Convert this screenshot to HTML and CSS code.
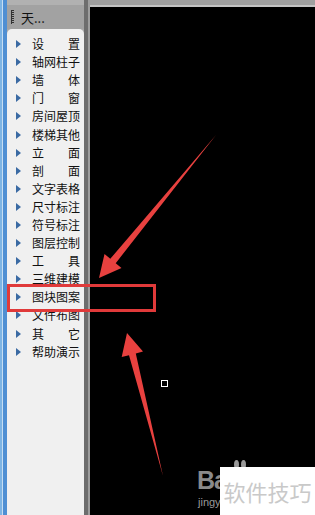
FILE: index.html
```html
<!DOCTYPE html>
<html lang="zh-CN">
<head>
    <meta charset="UTF-8">
    <title>天正建筑 - 菜单</title>
    <link rel="stylesheet" href="styles.css">
</head>
<body>
    <div class="app">
        <div class="edge"></div>

        <div class="panel">
            <div class="panel-top"></div>
            <div class="titlebar">
                <span class="grip"></span>
                <span class="title">天...</span>
            </div>
            <ul class="menu">
                <li><span class="arrow"></span><span class="label"><b>设</b><b>置</b></span></li>
                <li><span class="arrow"></span><span class="label">轴网柱子</span></li>
                <li><span class="arrow"></span><span class="label"><b>墙</b><b>体</b></span></li>
                <li><span class="arrow"></span><span class="label"><b>门</b><b>窗</b></span></li>
                <li><span class="arrow"></span><span class="label">房间屋顶</span></li>
                <li><span class="arrow"></span><span class="label">楼梯其他</span></li>
                <li><span class="arrow"></span><span class="label"><b>立</b><b>面</b></span></li>
                <li><span class="arrow"></span><span class="label"><b>剖</b><b>面</b></span></li>
                <li><span class="arrow"></span><span class="label">文字表格</span></li>
                <li><span class="arrow"></span><span class="label">尺寸标注</span></li>
                <li><span class="arrow"></span><span class="label">符号标注</span></li>
                <li><span class="arrow"></span><span class="label">图层控制</span></li>
                <li><span class="arrow"></span><span class="label"><b>工</b><b>具</b></span></li>
                <li><span class="arrow"></span><span class="label">三维建模</span></li>
                <li><span class="arrow"></span><span class="label">图块图案</span></li>
                <li><span class="arrow"></span><span class="label">文件布图</span></li>
                <li><span class="arrow"></span><span class="label"><b>其</b><b>它</b></span></li>
                <li><span class="arrow"></span><span class="label">帮助演示</span></li>
            </ul>
        </div>

        <div class="splitter"></div>

        <div class="view">
            <div class="view-top"></div>
            <div class="canvas">
                <span class="pick-box"></span>
            </div>
        </div>

        <!-- annotation layer drawn over the screenshot -->
        <svg class="marks" width="315" height="515" viewBox="0 0 315 515">
            <rect x="8.5" y="285.5" width="146" height="25" fill="none" stroke="#e03a3a" stroke-width="3"/>
            <polygon fill="#e8413f" points="216,135 115.7,263.2 121.5,268 99,278 104.5,254 110.3,258.8"/>
            <polygon fill="#e8413f" points="163,476 135.8,353.4 143,351.6 127,333 121.7,357 129,355.2"/>
        </svg>

        <div class="logo">
            <span class="logo-word">Ba</span>
            <span class="logo-paw"><i></i><i></i></span>
            <span class="logo-sub">jingy</span>
        </div>

        <div class="stamp">软件技巧</div>
    </div>
</body>
</html>
```

FILE: styles.css
```css
body {
    margin: 0;
    padding: 0;
    background: #000;
    font-family: "Noto Sans CJK SC", "DejaVu Sans", sans-serif;
}

.app {
    position: relative;
    display: flex;
    width: 315px;
    height: 515px;
    overflow: hidden;
}

.edge {
    width: 7px;
    background: linear-gradient(90deg, #7db4e4 0, #7db4e4 2px, #c6def3 2px, #c6def3 3px, #4f8fd3 3px);
}

.panel {
    width: 77px;
    display: flex;
    flex-direction: column;
    background: #a9a9a9;
}

.panel-top {
    height: 5px;
    background: #b1b1b1;
}

.titlebar {
    height: 24px;
    display: flex;
    align-items: center;
    padding-left: 4px;
    background: #a2a2a2;
}

.grip {
    width: 2px;
    height: 14px;
    margin-right: 7px;
    background: repeating-linear-gradient(180deg, #333 0, #333 1px, transparent 1px, transparent 2px);
    border-left: 1px dotted #333;
}

.title {
    font-size: 13px;
    color: #111;
}

.menu {
    flex: 1;
    list-style: none;
    margin: 0;
    padding: 6px 0 0;
    background: #f0f0f0;
    border-radius: 5px 5px 0 0;
}

.menu li {
    height: 18.1px;
    display: flex;
    align-items: center;
    padding-left: 9px;
}

.arrow {
    width: 0;
    height: 0;
    border-top: 4px solid transparent;
    border-bottom: 4px solid transparent;
    border-left: 5px solid #3a6aa3;
    margin-right: 11px;
}

.label {
    width: 48px;
    display: flex;
    justify-content: space-between;
    font-size: 12px;
    line-height: 14px;
    color: #111;
    white-space: nowrap;
}

.label b {
    font-weight: normal;
}

.splitter {
    width: 6px;
    background: linear-gradient(90deg, #6d6d6d 0, #6d6d6d 4px, #9d9d9d 4px);
}

.view {
    flex: 1;
    display: flex;
    flex-direction: column;
    background: #a0a0a0;
}

.view-top {
    height: 5px;
}

.canvas {
    flex: 1;
    position: relative;
    background: #000;
    border-top: 2px solid #c4c4c4;
}

.pick-box {
    position: absolute;
    left: 71px;
    top: 373px;
    width: 5px;
    height: 5px;
    border: 1px solid #fff;
}

.marks {
    position: absolute;
    left: 0;
    top: 0;
}

.logo {
    position: absolute;
    left: 197px;
    top: 458px;
    width: 60px;
    height: 52px;
    color: #8a8a8a;
    font-family: "Liberation Sans", Arial, sans-serif;
}

.logo-word {
    position: absolute;
    left: 0;
    top: 8px;
    font-size: 25px;
    font-weight: bold;
    letter-spacing: -1px;
}

.logo-paw {
    position: absolute;
    left: 37px;
    top: 2px;
    display: flex;
    gap: 2px;
}

.logo-paw i {
    width: 5px;
    height: 9px;
    border-radius: 50%;
    background: #9a9a9a;
}

.logo-sub {
    position: absolute;
    left: 1px;
    top: 38px;
    font-size: 11px;
    color: #9a9a9a;
}

.stamp {
    position: absolute;
    left: 220px;
    top: 467px;
    width: 95px;
    height: 48px;
    background: #fff;
    color: #c9c9c9;
    font-size: 22px;
    line-height: 48px;
    text-align: center;
    letter-spacing: 0;
}
```
